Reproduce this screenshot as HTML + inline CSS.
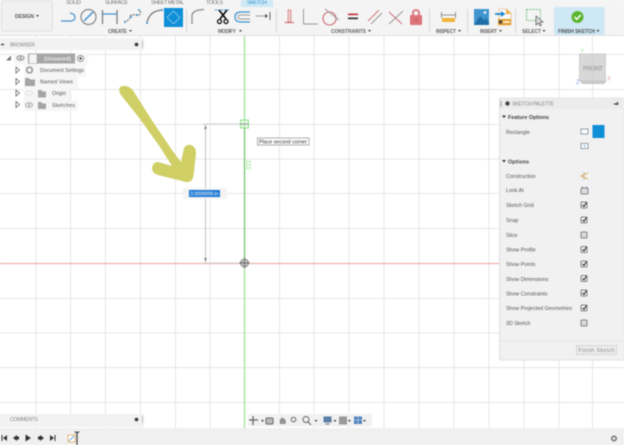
<!DOCTYPE html>
<html><head><meta charset="utf-8"><style>
html,body{margin:0;padding:0;width:624px;height:445px;overflow:hidden;background:#fff}
svg{display:block;filter:blur(.5px)}
text{font-family:"Liberation Sans",sans-serif;fill:#555}
</style></head><body>
<svg width="624" height="445" viewBox="0 0 624 445" xmlns="http://www.w3.org/2000/svg">
<rect width="624" height="445" fill="#fff"/>
<!-- grid -->
<g stroke="#e6e6e6" stroke-width="1">
<path d="M0 54.500H624M0 89.500H624M0 124.500H624M0 159H624M0 193.500H624M0 228.500H624M0 298.500H624M0 333H624M0 367.500H624M0 402.500H624"/>
<path d="M36 36V428M70.500 36V428M105.500 36V428M140.500 36V428M175.500 36V428M210 36V428M279.500 36V428M314 36V428M349 36V428M384 36V428M419 36V428M454 36V428M489 36V428M524 36V428M559 36V428M592.500 36V428"/>
</g>
<path d="M0 263.500H624" stroke="#e8b5a8" stroke-width="1.300"/>
<path d="M244.500 36V428" stroke="#a5e6a0" stroke-width="1.400"/>
<path d="M244.500 124V263" stroke="#6fbf6c" stroke-width="1"/>

<!-- toolbar -->
<rect width="624" height="35" fill="#f4f4f4"/>
<rect y="35" width="624" height="1" fill="#e2e2e2"/>
<rect x="1.500" y="1" width="51" height="30" rx="2" fill="#f1f1f1" stroke="#dfdfdf"/>
<text x="15" y="18" font-size="5" font-weight="bold" textLength="19" style="fill:#555">DESIGN</text>
<path d="M36 15h3l-1.500 2z" fill="#444"/>
<g font-size="5.500">
<text x="66" y="4" textLength="15" style="fill:#777">SOLID</text><text x="105" y="4" textLength="23" style="fill:#777">SURFACE</text><text x="151" y="4" textLength="33" style="fill:#777">SHEET METAL</text><text x="206" y="4" textLength="17" style="fill:#777">TOOLS</text>
</g>
<rect x="241" y="0" width="32" height="7" fill="#cfe8f5"/>
<text x="247" y="4" font-size="5.500" textLength="20" style="fill:#2f95d4">SKETCH</text>

<!-- create icons -->
<g fill="none" stroke-width="1.200">
<path d="M61 21H71Q75 20.500 75 17Q75 14 70 13" stroke="#4a90c9"/>
<circle cx="88.500" cy="17" r="7.500" stroke="#888"/>
<path d="M84 21L93 12" stroke="#3c93d3" stroke-width="1.400"/>
<path d="M102.500 10V24M117 10V24" stroke="#777"/><path d="M103 14H117" stroke="#3c93d3"/>
<path d="M124 22Q130 20 130 17T136 15T140 10" stroke="#777" stroke-dasharray="2 1"/>
<path d="M147 23Q149 11 162 10" stroke="#777"/>
</g>
<g fill="#3c93d3"><circle cx="125" cy="22" r="1"/><circle cx="131" cy="17" r="1"/><circle cx="137" cy="15" r="1"/><circle cx="139" cy="10" r="1"/><circle cx="147" cy="23" r="1"/><circle cx="162" cy="10" r="1"/></g>
<rect x="164" y="8" width="19" height="19" fill="#0f8fd8"/>
<path d="M173.500 11L180 17.500L173.500 24L167 17.500Z" fill="none" stroke="#cfe9f8" stroke-width=".8" stroke-dasharray="1.500 .8"/>
<text x="108" y="33" font-size="5" textLength="19" font-weight="bold" style="fill:#666">CREATE</text><path d="M129 30h3l-1.500 2z" fill="#444"/>
<rect x="186" y="9" width="1" height="24" fill="#d8d8d8"/>

<!-- modify icons -->
<g fill="none">
<path d="M192 24V16Q192 10 204 9.500" stroke="#9a9a9a" stroke-width="1.500"/>
<path d="M215 10H230" stroke="#3c93d3" stroke-width="1" stroke-dasharray="2 1"/>
<path d="M219 10L226 19M227 10L220 19" stroke="#111" stroke-width="1.700"/>
<circle cx="219.500" cy="21.500" r="2" stroke="#111" stroke-width="1.300"/><circle cx="226" cy="21.500" r="2" stroke="#111" stroke-width="1.300"/>
<path d="M250 12H241Q235 12 235 17T241 22H250" stroke="#3c93d3" stroke-width="1.200"/>
<path d="M250 15H241Q238 15 238 17T241 19H250" stroke="#999" stroke-width="1"/>
<path d="M256 16H267" stroke="#777" stroke-width="1" stroke-dasharray="2 1"/><path d="M265 14l3 2-3 2z" fill="#444"/>
<path d="M270 12V20" stroke="#666"/>
</g>
<text x="218" y="33" font-size="5" textLength="18" font-weight="bold" style="fill:#666">MODIFY</text><path d="M239 30h3l-1.500 2z" fill="#444"/>
<rect x="276" y="9" width="1" height="24" fill="#d8d8d8"/>

<!-- constraints icons -->
<g fill="none">
<path d="M288 10H291V22H288Z" fill="#f0d0d0" stroke="#c9494f" stroke-width=".8" stroke-dasharray="1 .6"/>
<path d="M285 22.500H294" stroke="#c9494f" stroke-width="1.300" stroke-dasharray="1.200 .5"/>
<path d="M303.500 9V24" stroke="#999" stroke-width="1"/><path d="M303.500 24H318" stroke="#999" stroke-width="1"/>
<circle cx="329.500" cy="18.500" r="6.500" stroke="#d06a70" stroke-width="1.100"/>
<path d="M325 9L339 20" stroke="#999" stroke-width="1"/>
<rect x="348" y="13.500" width="10" height="1.700" fill="#c5373e"/><rect x="348" y="17.500" width="10" height="1.700" fill="#333"/>
<path d="M368 21L379 10" stroke="#d0737a" stroke-width="1"/><path d="M371 24L382 13" stroke="#999" stroke-width="1"/>
<path d="M389 12L402 24" stroke="#d0737a" stroke-width="1"/><path d="M389 24L403 11" stroke="#999" stroke-width="1"/>
<path d="M413 15V13Q413 10 416 10T419 13V15" stroke="#d9747a" stroke-width="1.800"/>
</g>
<rect x="410" y="15" width="12" height="10" rx="1" fill="#dd7379"/>
<rect x="415.500" y="19" width="1.200" height="2" fill="#b54a50"/>
<text x="331" y="33" font-size="5" textLength="35" font-weight="bold" style="fill:#666">CONSTRAINTS</text>
<path d="M368 30h3l-1.500 2z" fill="#444"/>
<rect x="429" y="9" width="1" height="24" fill="#d8d8d8"/>

<!-- inspect -->
<rect x="442" y="18" width="13" height="4" fill="#f2b53a"/>
<path d="M442 15H455M441.500 12V18M455.500 12V18" stroke="#777" stroke-width=".8" fill="none"/>
<text x="436" y="33" font-size="5" textLength="20" font-weight="bold" style="fill:#666">INSPECT</text><path d="M458 30h3l-1.500 2z" fill="#444"/>
<rect x="467" y="9" width="1" height="24" fill="#d8d8d8"/>

<!-- insert -->
<rect x="474" y="9" width="15" height="16" fill="#3f95d0"/>
<path d="M474 25L480 16L484 20L486 18L489 22V25Z" fill="#1f6ea8"/>
<circle cx="485" cy="12.500" r="1.400" fill="#e4f2fb"/>
<path d="M499 9H507L511 13V25H499Z" fill="#fbfbfb" stroke="#e0b060" stroke-width=".6"/>
<path d="M506 9L511 14H506Z" fill="#f2a93a"/>
<rect x="498" y="19" width="13" height="6" fill="#e39c2a"/>
<rect x="499" y="20.500" width="3" height="3" fill="#444"/>
<rect x="503" y="21" width="7" height="2" fill="#fbe7c3"/>
<path d="M495 14H502" stroke="#1f87cf" stroke-width="1.800"/><path d="M501 11L505.500 14L501 17Z" fill="#1f87cf"/>
<text x="480" y="33" font-size="5" textLength="17" font-weight="bold" style="fill:#666">INSERT</text><path d="M499 30h3l-1.500 2z" fill="#444"/>
<rect x="515" y="9" width="1" height="24" fill="#d8d8d8"/>

<!-- select -->
<rect x="526.500" y="9.500" width="14" height="11" fill="none" stroke="#7dc08a" stroke-width="1" stroke-dasharray="2 1"/>
<path d="M536 16L536 25L538.500 23L540 26L541.500 25L540 22.500L543 22Z" fill="#ddd" stroke="#555" stroke-width=".7"/>
<text x="522" y="33" font-size="5" textLength="19" font-weight="bold" style="fill:#666">SELECT</text><path d="M542.500 30h3l-1.500 2z" fill="#444"/>

<!-- finish sketch -->
<rect x="554" y="7" width="50.500" height="28" fill="#cfe8f5"/>
<circle cx="577.500" cy="17" r="6" fill="#5cb531"/>
<path d="M574.500 17L576.800 19.300L580.700 15" fill="none" stroke="#fff" stroke-width="1.500"/>
<text x="558" y="33" font-size="5" textLength="37" font-weight="bold" style="fill:#555">FINISH SKETCH</text><path d="M596.500 30h3l-1.500 2z" fill="#444"/>

<!-- browser panel -->
<rect x="0" y="38" width="144" height="12" fill="#f2f2f2"/>
<path d="M1 44.500H4" stroke="#333" stroke-width="1.300"/>
<text x="10" y="46.500" font-size="5.200" textLength="25" style="fill:#888">BROWSER</text>
<circle cx="136.500" cy="44.500" r="1.800" fill="#333"/><rect x="142" y="41" width="1" height="7" fill="#bbb"/>
<path d="M6 60.500L11 55.500V60.500Z" fill="#777"/>
<g fill="#f6f6f6"><rect x="14" y="53" width="74" height="12"/><rect x="24" y="65" width="62" height="12"/><rect x="24" y="77" width="54" height="12"/><rect x="24" y="89" width="46" height="11"/><rect x="24" y="100" width="54" height="11"/></g>
<ellipse cx="20.500" cy="58" rx="3.500" ry="2.200" fill="none" stroke="#888"/><circle cx="20.500" cy="58" r="1.100" fill="#888"/>
<rect x="28" y="53.500" width="47" height="10" fill="#a6a6a6"/>
<rect x="29" y="54" width="8" height="9.500" fill="#f5f5f5" stroke="#999" stroke-width=".5"/>
<text x="44" y="60.500" font-size="5.200" font-weight="bold" textLength="27" style="fill:#eee">(Unsaved)</text>
<circle cx="80.500" cy="58.500" r="3" fill="#fff" stroke="#666" stroke-width=".7"/><circle cx="80.500" cy="58.500" r="1.200" fill="#333"/>
<g fill="#fff" stroke="#666" stroke-width=".8">
<path d="M16 67L19.500 70L16 73Z"/><path d="M16 78.500L19.500 81.500L16 84.500Z"/><path d="M16 90L19.500 93L16 96Z"/><path d="M16 101.500L19.500 104.500L16 107.500Z"/>
</g>
<circle cx="29.500" cy="70" r="2.800" fill="none" stroke="#999" stroke-width="1.700"/>
<g fill="#a5a5a5"><path d="M25 78H29L30 79.500H35V86H25Z"/><path d="M38 90H41.500L42.500 91.500H46V97.500H38Z"/><path d="M38 102H41.500L42.500 103.500H46V109H38Z"/></g>
<ellipse cx="29" cy="93" rx="3.500" ry="2.200" fill="none" stroke="#e2e2e2"/>
<ellipse cx="29" cy="105" rx="3.500" ry="2.200" fill="none" stroke="#aaa"/><circle cx="29" cy="105" r="1.100" fill="#aaa"/>
<text x="40" y="72" font-size="5.200" textLength="44" style="fill:#555">Document Settings</text>
<text x="40" y="83.500" font-size="5.200" textLength="33" style="fill:#555">Named Views</text>
<text x="52" y="95" font-size="5.200" textLength="14" style="fill:#555">Origin</text>
<text x="52" y="107" font-size="5.200" textLength="23" style="fill:#555">Sketches</text>

<!-- sketch dimension -->
<path d="M203 124H244M203 263H244" stroke="#cfcfcf" stroke-width="1"/>
<path d="M205.500 125V262" stroke="#b0b0b0" stroke-width=".8"/>
<path d="M204 129L205.500 125L207 129ZM204 258L205.500 262L207 258Z" fill="#888"/>
<rect x="240.500" y="120" width="8" height="8" fill="#d8f5d5" fill-opacity=".6" stroke="#7fdc7a" stroke-width=".8"/>
<path d="M240 124H249" stroke="#777" stroke-width=".7"/>
<path d="M246 162H251M246 165H251M246 168H251M247 160V170M250 160V170" stroke="#8fe88a" stroke-width=".5" fill="none"/>
<circle cx="244.500" cy="263" r="4" fill="#c4c4c4" stroke="#777" stroke-width=".8"/>
<path d="M244.500 258V268M239.500 263H249.500" stroke="#555" stroke-width=".7"/>
<rect x="183" y="188" width="44" height="11" fill="#f3f3f3"/>
<rect x="189" y="190" width="31" height="7" fill="#1976d2"/>
<text x="190" y="195.500" font-size="5.400" textLength="28.500" style="fill:#e8f2fb">3.9999999 in</text>
<rect x="257.500" y="138" width="51.500" height="7" fill="#fff" stroke="#777" stroke-width=".6"/>
<text x="259" y="143.700" font-size="5.300" textLength="48" style="fill:#333">Place second corner</text>

<!-- yellow arrow -->
<path d="M126 86Q131 87 134 92L153 122L172 150L181 162L184 148Q187 144 191 145Q196 147 196 153L193.500 176Q192 183 186 182L158 175Q152 173 152 168Q153 162 158 162L172 166L160 147L140 119L121 95Q117 88 122 86Z" fill="#cfcf66"/>

<!-- view cube -->
<path d="M580 81H604L606 78V82L604 84H582Z" fill="#c9c9c9"/>
<rect x="579.500" y="54" width="26" height="27" fill="#d8d8d8" stroke="#c8c8c8" stroke-width=".8"/>
<text x="583" y="70.500" font-size="6.400" textLength="20" font-weight="bold" style="fill:#a8a8a8">FRONT</text>
<path d="M592.500 54V81" stroke="#cfcfcf" stroke-width=".7"/>
<text x="580" y="53" font-size="6" style="fill:#a8e8a4">Y</text>
<text x="576" y="84" font-size="6" style="fill:#8fa0ee">Z</text>
<text x="607" y="80.500" font-size="6" style="fill:#eeaaa8">X</text>

<!-- sketch palette -->
<rect x="499.500" y="98" width="124.500" height="262" fill="#f1f1f1" stroke="#d8d8d8" stroke-width=".7"/>
<rect x="500" y="98" width="124" height="11" fill="#ececec"/>
<rect x="500.500" y="101" width="1" height="6" fill="#999"/>
<circle cx="507.500" cy="103.500" r="2.200" fill="#444"/>
<text x="512" y="105.300" font-size="5.200" textLength="42" style="fill:#888">SKETCH PALETTE</text>
<path d="M614 104h3M617.500 102v3" stroke="#333" stroke-width="1.200"/>
<g fill="#333"><path d="M502 115.500H506L504 118Z"/><path d="M502 160H506L504 162.500Z"/></g>
<text x="508" y="119" font-size="5.400" font-weight="bold" textLength="41" style="fill:#444">Feature Options</text>
<text x="508" y="163.300" font-size="5.400" font-weight="bold" textLength="21" style="fill:#444">Options</text>
<g font-size="5.300">
<text x="506" y="133.800" style="fill:#555">Rectangle</text>
<text x="506" y="177.800" style="fill:#555">Construction</text>
<text x="506" y="192" style="fill:#555">Look At</text>
<text x="506" y="207" style="fill:#555">Sketch Grid</text>
<text x="506" y="221.800" style="fill:#555">Snap</text>
<text x="506" y="236.800" style="fill:#555">Slice</text>
<text x="506" y="251.500" style="fill:#555">Show Profile</text>
<text x="506" y="266" style="fill:#555">Show Points</text>
<text x="506" y="280.800" style="fill:#555">Show Dimensions</text>
<text x="506" y="295.500" style="fill:#555">Show Constraints</text>
<text x="506" y="310" style="fill:#555" textLength="66">Show Projected Geometries</text>
<text x="506" y="324.800" style="fill:#555">3D Sketch</text>
</g>
<rect x="581" y="129" width="7" height="5" fill="#fff" stroke="#7a8a99" stroke-width=".8"/>
<rect x="592.500" y="125" width="12" height="13" fill="#0f8fd8"/>
<rect x="581" y="143.500" width="7" height="5" fill="#fff" stroke="#7a8a99" stroke-width=".8"/>
<circle cx="584.500" cy="146" r=".8" fill="#3c93d3"/>
<path d="M588 173L581 176L588 179" fill="none" stroke="#e0a040" stroke-width=".9"/><path d="M584 172V180" stroke="#999" stroke-width=".6"/>
<rect x="581" y="188" width="7" height="6" rx="1" fill="#ddd" stroke="#667" stroke-width=".8"/><path d="M582.500 186.500V188.500M586.500 186.500V188.500" stroke="#667" stroke-width=".8"/>
<g fill="#eee" stroke="#666" stroke-width=".8">
<rect x="581" y="202" width="6" height="6" rx="1"/><rect x="581" y="217" width="6" height="6" rx="1"/><rect x="581" y="232" width="6" height="6" rx="1" fill="#ddd"/>
<rect x="581" y="246.500" width="6" height="6" rx="1"/><rect x="581" y="261" width="6" height="6" rx="1"/><rect x="581" y="275.500" width="6" height="6" rx="1"/><rect x="581" y="290" width="6" height="6" rx="1"/><rect x="581" y="305" width="6" height="6" rx="1"/><rect x="581" y="320" width="6" height="6" rx="1" fill="#ddd"/>
</g>
<path d="M582.500 205L584 206.500L586.500 202.500M582.500 220L584 221.500L586.500 217.500M582.500 249.500L584 251L586.500 247M582.500 264L584 265.500L586.500 261.500M582.500 278.500L584 280L586.500 276M582.500 293L584 294.500L586.500 290.500M582.500 308L584 309.500L586.500 305.500" fill="none" stroke="#222" stroke-width="1"/>
<path d="M500 341H624" stroke="#e0e0e0" stroke-width=".7"/>
<rect x="576.500" y="345.500" width="40" height="9" fill="#ececec" stroke="#ccc" stroke-width=".7"/>
<text x="578.500" y="352" font-size="5.300" textLength="36" style="fill:#888">Finish Sketch</text>

<!-- comments -->
<rect x="0" y="414" width="144" height="13" fill="#f2f2f2"/>
<text x="10" y="421" font-size="5.200" textLength="28" style="fill:#888">COMMENTS</text>
<circle cx="136.500" cy="419.500" r="1.800" fill="#333"/><rect x="142" y="416" width="1" height="7" fill="#bbb"/>

<!-- nav bar -->
<rect x="248" y="414" width="124" height="12.500" fill="#f1f1f1"/>
<g fill="none" stroke="#666" stroke-width="1">
<path d="M253 416V425M249 420H258" stroke-width="1.300"/>
<rect x="266" y="418" width="7" height="6" rx="1" fill="#bbb"/>
<path d="M280.500 424V419M282 424V417.500M283.500 424V418M285 424V419.500" stroke-width="1"/>
<circle cx="293.500" cy="419.500" r="2.300"/>
<circle cx="306" cy="419.500" r="3"/><path d="M308 422L311 425"/>
</g>
<path d="M261 420h3l-1.500 2z" fill="#444"/><path d="M314.500 420h3l-1.500 2z" fill="#444"/><path d="M333.500 420h3l-1.500 2z" fill="#444"/><path d="M348 420h3l-1.500 2z" fill="#444"/><path d="M363 420h3l-1.500 2z" fill="#444"/>
<rect x="323.500" y="416.500" width="8" height="6" fill="#5b7fa8"/><path d="M325.500 424H329.500" stroke="#777"/>
<rect x="339" y="416.500" width="8" height="8" fill="#999"/>
<rect x="354" y="416.500" width="8" height="7.500" fill="#4f83bd"/><path d="M354 420H362M358 416.500V424" stroke="#dbe8f5" stroke-width=".6"/>

<!-- timeline -->
<rect x="0" y="428" width="624" height="17" fill="#f0f0f0"/>
<g fill="#333">
<rect x="1.500" y="435" width="1" height="6"/><path d="M7 435V441L3 438Z"/>
<path d="M17 435V441L13 438Z"/><rect x="17" y="436.500" width="2" height="3"/>
<path d="M25.500 434.500V441.500L31 438Z"/>
<rect x="38" y="436.500" width="2" height="3"/><path d="M40 435V441L44 438Z"/>
<path d="M50 435V441L54 438Z"/><rect x="54.500" y="435" width="1" height="6"/>
</g>
<rect x="68" y="435" width="7" height="7" fill="#fff" stroke="#e9a85a" stroke-width=".8"/>
<path d="M69 441L74 436" stroke="#3c93d3" stroke-width=".8"/>
<path d="M74 431.500H80L77 434Z" fill="#555"/><rect x="76.300" y="433" width="1.400" height="12" fill="#555"/>
<circle cx="614" cy="438.500" r="2.200" fill="none" stroke="#777" stroke-width="1.600"/>
</svg>
</body></html>
